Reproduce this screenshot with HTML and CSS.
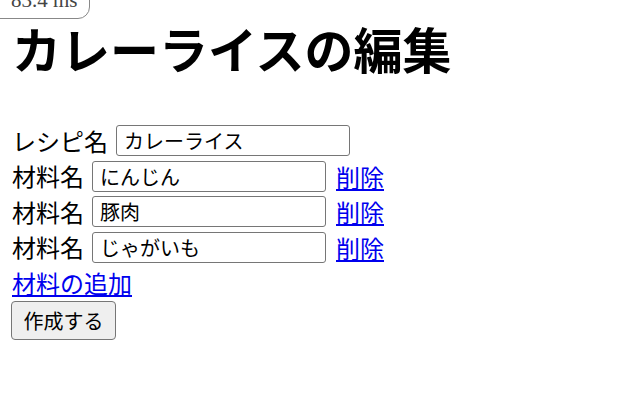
FILE: index.html
```html
<!DOCTYPE html>
<html lang="ja">
<head>
<meta charset="utf-8">
<title>カレーライスの編集</title>
<link rel="stylesheet" href="styles.css">
</head>
<body>
<div class="badge">83.4 ms</div>
<h1 class="title">カレーライスの編集</h1>
<form class="form">
  <div class="row"><label class="label">レシピ名</label><input class="field" type="text" value="カレーライス"></div>
  <div class="row"><label class="label">材料名</label><input class="field" type="text" value="にんじん"><a class="link" href="#">削除</a></div>
  <div class="row"><label class="label">材料名</label><input class="field" type="text" value="豚肉"><a class="link" href="#">削除</a></div>
  <div class="row"><label class="label">材料名</label><input class="field" type="text" value="じゃがいも"><a class="link" href="#">削除</a></div>
  <div class="row"><a class="link" href="#">材料の追加</a></div>
  <div class="btnrow"><button class="btn" type="button">作成する</button></div>
</form>
</body>
</html>
```
FILE: styles.css
```css
html, body { background: #fff; }
body {
  margin: 0;
  padding: 0 12px;
  font-family: "Noto Sans CJK JP", "Noto Sans", sans-serif;
  font-size: 24px;
  color: #000;
  position: relative;
}
.badge {
  position: absolute;
  left: -12px;
  top: -12px;
  height: 31px;
  width: 102px;
  padding: 0 0 0 22px;
  line-height: 22px;
  border: 1px solid #888;
  border-radius: 0 0 12px 0;
  font-family: "Liberation Serif", serif;
  font-size: 21px;
  color: #444;
  box-sizing: border-box;
  overflow: hidden;
  white-space: nowrap;
}
.title {
  margin: 0;
  padding-top: 16px;
  font-size: 49px;
  font-weight: 700;
  line-height: 64px;
  margin-bottom: 43px;
}
.form { display: flex; flex-direction: column; }
.row {
  display: flex;
  align-items: center;
  height: 35.5px;
  flex: none;
}
.label { line-height: 30px; margin-right: 8px; }
.field {
  width: 234px;
  height: 31px;
  box-sizing: border-box;
  border: 1px solid #767676;
  border-radius: 3px;
  padding: 1px 7px;
  font-family: "Noto Sans CJK JP", sans-serif;
  font-size: 20px;
  color: #000;
  margin: 0 10px 0 0;
}
.link { color: #0000ee; text-decoration: underline; }
.btnrow { display: flex; flex: none; }
.btn {
  width: 105px;
  height: 39px;
  margin-left: -1px;
  box-sizing: border-box;
  border: 1px solid #767676;
  border-radius: 4px;
  background: #efefef;
  font-family: "Noto Sans CJK JP", sans-serif;
  font-size: 20px;
  color: #000;
  padding: 0;
}
```
